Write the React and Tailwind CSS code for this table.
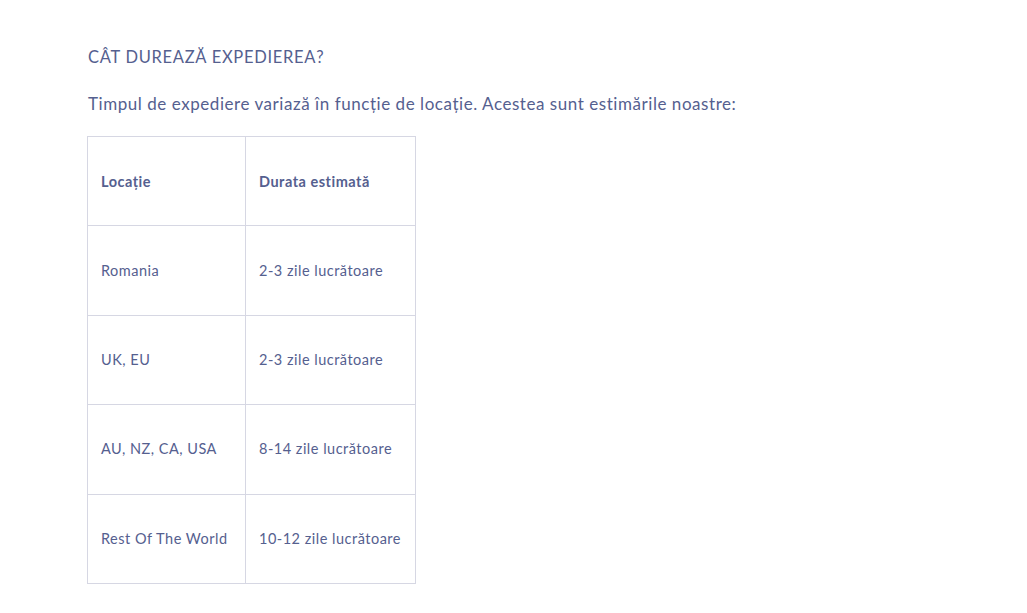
const rows = [
  ["Romania", "2-3 zile lucrătoare"],
  ["UK, EU", "2-3 zile lucrătoare"],
  ["AU, NZ, CA, USA", "8-14 zile lucrătoare"],
  ["Rest Of The World", "10-12 zile lucrătoare"],
];

export default function App() {
  return (
    <div className="min-h-screen bg-white pl-[88px] pt-[46px] text-[#55608f]" style={{ fontFamily: "Lato, 'Open Sans', sans-serif" }}>
      <h2 className="text-[16.5px] leading-[22px] tracking-[0.72px]">CÂT DUREAZĂ EXPEDIEREA?</h2>
      <p className="mt-[25px] text-[17px] leading-[22px] tracking-[0.55px]">
        Timpul de expediere variază în funcție de locație. Acestea sunt estimările noastre:
      </p>
      <table className="mt-[21px] -ml-px border-collapse text-[14.5px] tracking-[0.5px]">
        <thead>
          <tr className="h-[89.4px]">
            <th className="w-[158px] border border-[#d6d7e3] px-[13px] pt-[2px] text-left font-bold">Locație</th>
            <th className="w-[170px] border border-[#d6d7e3] px-[13px] pt-[2px] text-left font-bold">Durata estimată</th>
          </tr>
        </thead>
        <tbody>
          {rows.map((r, i) => (
            <tr key={i} className="h-[89.4px]">
              <td className="border border-[#d6d7e3] px-[13px]">{r[0]}</td>
              <td className="border border-[#d6d7e3] px-[13px]">{r[1]}</td>
            </tr>
          ))}
        </tbody>
      </table>
    </div>
  );
}
